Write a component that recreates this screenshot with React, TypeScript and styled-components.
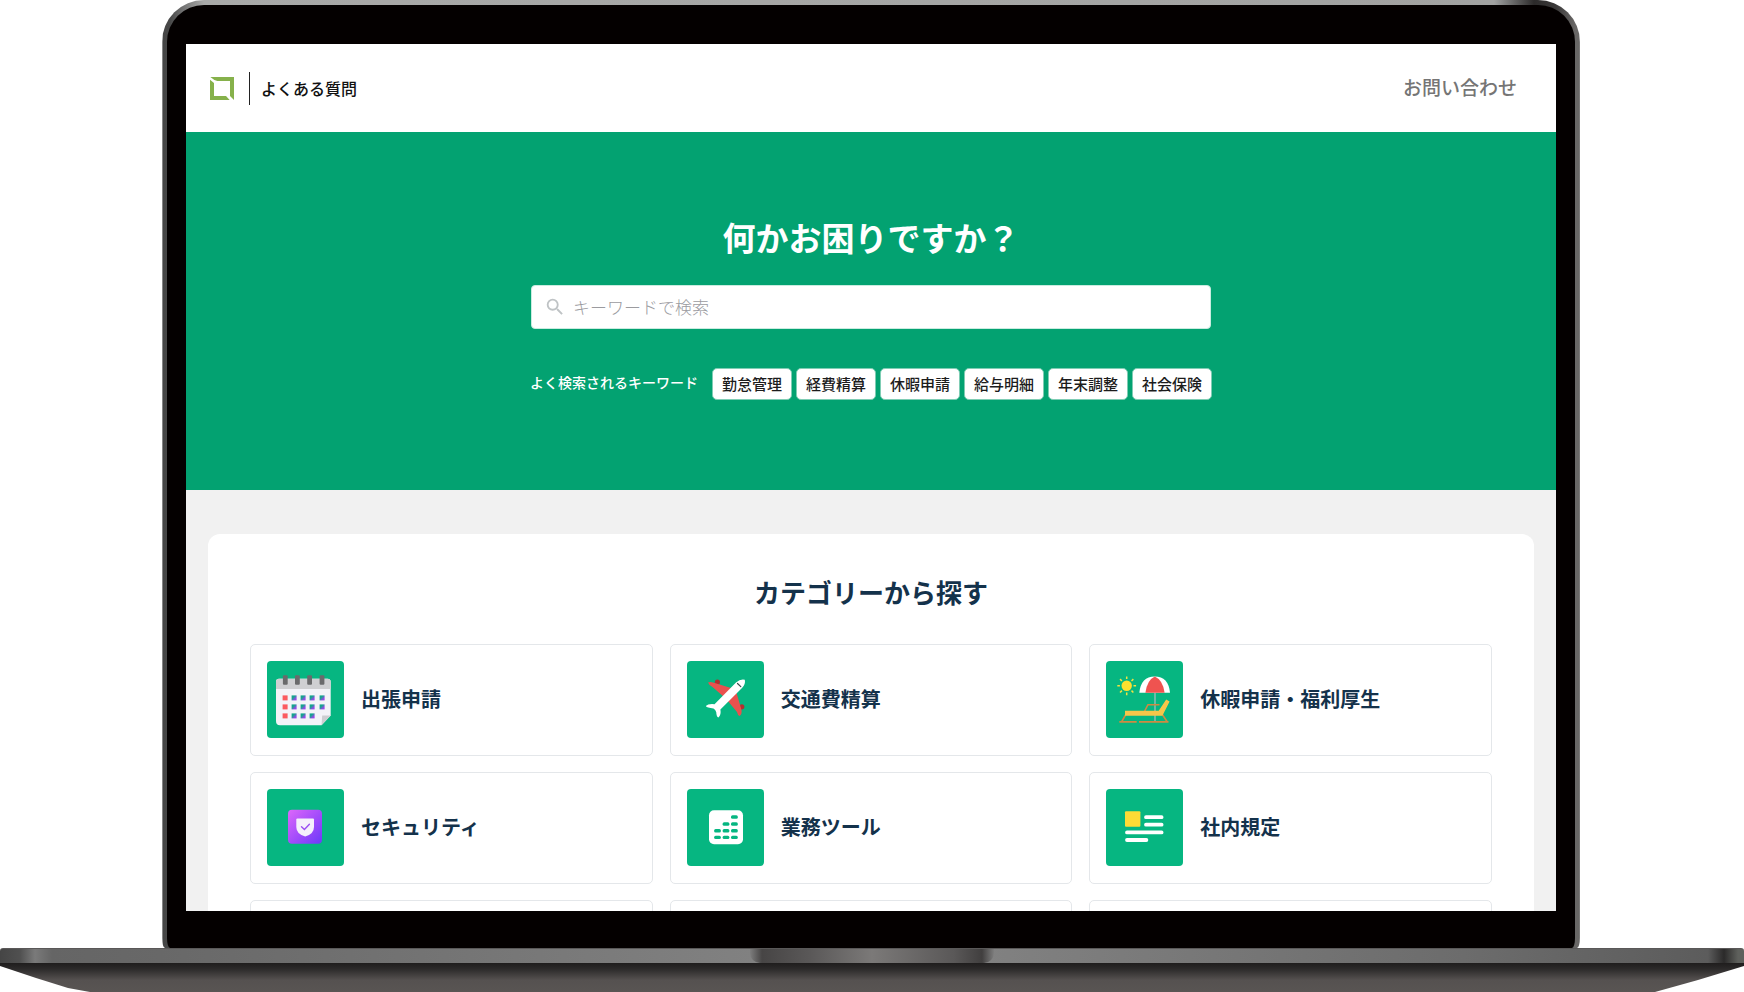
import React from "react";
import styled, { createGlobalStyle } from "styled-components";
import { MdSearch } from "react-icons/md";

const GlobalStyle = createGlobalStyle`
  * { box-sizing: border-box; }
  body {
    margin: 0;
    background: #fff;
    font-family: "Noto Sans CJK JP", "Noto Sans", sans-serif;
    -webkit-font-smoothing: antialiased;
  }
`;

const Laptop = styled.div`
  display: flex;
  flex-direction: column;
  height: 100vh;
  overflow: hidden;
`;

const Lid = styled.div`
  display: flex;
  flex: 1;
  min-height: 0;
  margin: 0 164px 0 162px;
  padding: 5px 5px 0;
  border-radius: 42px 42px 3px 3px / 42px 42px 10px 10px;
  background: linear-gradient(
    90deg,
    #868686 0,
    #868686 1px,
    #454545 1px,
    #484848 8px,
    #707070 20px,
    #a9a9a8 42px,
    #a2a2a1 calc(100% - 86px),
    #8a8a8a calc(100% - 78px),
    #2c2a2a calc(100% - 46px),
    #3a3838 calc(100% - 24px),
    #696766 calc(100% - 5px),
    #696766 calc(100% - 1px),
    #8e8c8c 100%
  );
`;

const Bezel = styled.div`
  display: flex;
  flex: 1;
  min-width: 0;
  padding: 39px 19px 37px;
  border-radius: 37px 37px 3px 3px / 37px 37px 10px 10px;
  background: #040000;
`;

const Screen = styled.div`
  flex: 1;
  min-width: 0;
  overflow: hidden;
  background: #f1f1f1;
`;

const Deck = styled.div`
  display: flex;
  flex: none;
  justify-content: center;
  height: 15px;
  border-top: 1px solid #5a5858;
  border-radius: 3px 3px 0 0;
  background: linear-gradient(
    90deg,
    #454545 0,
    #505050 20px,
    #7a7a7a 35px,
    #656565 52px,
    #686868 160px,
    #868686 50%,
    #6c6c6c calc(100% - 280px),
    #5c5c5c calc(100% - 36px),
    #2b2a2a calc(100% - 20px),
    #5e605c calc(100% - 6px),
    #5e605c 100%
  );
`;

const Notch = styled.div`
  width: 244px;
  border-radius: 0 0 10px 10px;
  background: linear-gradient(
    90deg,
    #7d7d7d 0,
    #474545 12px,
    #5a5858 60px,
    #7b7978 50%,
    #5a5858 calc(100% - 40px),
    #413f3f calc(100% - 12px),
    #7d7d7d 100%
  );
`;

const Underside = styled.div`
  flex: none;
  height: 29px;
  background: linear-gradient(180deg, #1f1d1d 0, #2c2a2a 6px, #555150 17px, #595553 100%);
  clip-path: polygon(
    0 0,
    100% 0,
    100% 3px,
    calc(100% - 46px) 17px,
    calc(100% - 89px) 100%,
    90px 100%,
    68px 25px,
    36px 15px,
    0 3px
  );
`;

const Header = styled.header`
  display: flex;
  align-items: center;
  justify-content: space-between;
  height: 88px;
  padding: 0 39px 0 24px;
  background: #fff;
`;

const Brand = styled.a`
  display: flex;
  align-items: center;
  color: #111;
  text-decoration: none;
`;

const BrandName = styled.span`
  margin-left: 15px;
  padding-left: 11px;
  border-left: 1px solid #222;
  font-size: 16px;
  font-weight: 500;
  line-height: 33px;
`;

const ContactLink = styled.a`
  padding-bottom: 3px;
  color: #757575;
  font-size: 19px;
  font-weight: 500;
  line-height: 28px;
  text-decoration: none;
`;

const Hero = styled.section`
  display: flex;
  flex-direction: column;
  align-items: center;
  height: 358px;
  padding-top: 81px;
  background: #03a271;
`;

const HeroTitle = styled.h1`
  margin: 0 0 24px;
  color: #fff;
  font-size: 33px;
  font-weight: 700;
  line-height: 48px;
`;

const SearchBox = styled.label`
  display: flex;
  align-items: center;
  gap: 7px;
  width: 680px;
  height: 44px;
  padding: 0 12px;
  border: 1px solid #c9ece0;
  border-radius: 4px;
  background: #fff;
  color: #bfc3c5;
`;

const SearchInput = styled.input`
  flex: 1;
  min-width: 0;
  padding: 0;
  border: 0;
  outline: 0;
  background: transparent;
  color: #222;
  font-family: inherit;
  font-size: 17px;
  font-weight: 300;
  line-height: 24px;
  &::placeholder {
    color: #9b9b9f;
    opacity: 1;
  }
`;

const Keywords = styled.div`
  display: flex;
  align-items: center;
  justify-content: space-between;
  width: 682px;
  margin-top: 39px;
`;

const KeywordsLabel = styled.span`
  padding-bottom: 4px;
  color: #fff;
  font-size: 14px;
  font-weight: 500;
  line-height: 28px;
`;

const KeywordList = styled.div`
  display: flex;
  gap: 4px;
`;

const Keyword = styled.button`
  height: 32px;
  padding: 0 9px;
  border: 1px solid #7fcdb4;
  border-radius: 5px;
  background: #fff;
  color: #1c1c1c;
  font-family: inherit;
  font-size: 15px;
  font-weight: 500;
  line-height: 28px;
`;

const Panel = styled.section`
  margin: 44px 22px 0;
  padding: 38px 42px;
  border-radius: 12px;
  background: #fff;
`;

const PanelTitle = styled.h2`
  margin: 0 0 32px;
  color: #14324b;
  font-size: 26px;
  font-weight: 700;
  line-height: 40px;
  text-align: center;
`;

const CardGrid = styled.div`
  display: grid;
  grid-template-columns: repeat(3, 1fr);
  gap: 16px 17px;
`;

const Card = styled.a`
  display: flex;
  align-items: center;
  gap: 17px;
  height: 112px;
  padding: 0 16px 1px;
  border: 1px solid #e4e7ea;
  border-radius: 5px;
  color: #14324b;
  font-size: 20px;
  font-weight: 700;
  line-height: 28px;
  text-decoration: none;
`;

const CardLabel = styled.span`
  padding-bottom: 1px;
`;

const Tile = styled.svg`
  flex: none;
  width: 77px;
  height: 77px;
  border-radius: 4px;
  background: #06b681;
`;

const Logo = () => (
  <svg width="24" height="23" viewBox="0 0 72 69" aria-hidden="true">
    <path fill="#86b14b" d="M1 0H72V69L60 57V12H22Q12 10 1 0Z" />
    <path fill="#86b14b" d="M0 8L12 18V57H48L59 69H0Z" />
  </svg>
);

const CalendarIcon = () => {
  const columns = [18, 27, 36, 45, 55];
  const rows = [37, 46, 55];
  return (
    <Tile viewBox="0 0 77 77" aria-hidden="true">
      <defs>
        <linearGradient id="day" x1="0" y1="0" x2="1" y2="1">
          <stop offset="0.35" stopColor="#13a58c" />
          <stop offset="0.75" stopColor="#9a45e8" />
        </linearGradient>
      </defs>
      <path d="M12 17.7H60.5Q63.7 17.7 63.7 21V54.5L54.5 64.3H13Q9 64.3 9 60V21Q9 17.7 12 17.7Z" fill="#f3f3f8" />
      <path d="M12 17.7H60.5Q63.7 17.7 63.7 21V28H9V21Q9 17.7 12 17.7Z" fill="#cfcfd2" />
      <path d="M54.5 64.3L55.2 54.6L63.7 54.5Z" fill="#cdcdd1" />
      {[18.3, 30.4, 42.6, 55].map((x) => (
        <rect key={x} x={x - 2.4} y="14.3" width="4.8" height="9.4" rx="1" fill="#6a6a6c" />
      ))}
      {rows.map((y, r) =>
        columns.map((x, c) =>
          r === 2 && c === 4 ? null : (
            <rect key={`${r}-${c}`} x={x - 2.4} y={y - 2.6} width="5" height="5" fill={c === 0 ? "#fb5a60" : "url(#day)"} />
          )
        )
      )}
    </Tile>
  );
};

const PlaneIcon = () => (
  <Tile viewBox="0 0 77 77" aria-hidden="true">
    <g fill="#b2302f">
      <circle cx="30.4" cy="21" r="2.6" />
      <circle cx="54.8" cy="45.8" r="2.6" />
    </g>
    <path d="M21 21.6Q23 20.5 26 21.4L44 27L37 36L25.5 26Q22 24.4 21 21.6Z" fill="#e9514e" />
    <path d="M40 39L49 30L54.5 49Q55.2 53.5 52.5 55Q50.6 54 50 51Z" fill="#e9514e" />
    <path
      d="M57.8 18.7Q58.8 23 55 27L33.4 48.6Q34.4 54 31.4 56.6Q29.5 56 29.2 51Q28.5 48.8 26.5 47.4Q20 47 18.8 45Q21 42.6 27.5 43.2L49 21.6Q53.5 17.5 57.8 18.7Z"
      fill="#fff"
    />
    <path d="M50.5 22.5L53.8 25.6" stroke="#3d4a4a" strokeWidth="1.2" strokeLinecap="round" />
  </Tile>
);

const BeachIcon = () => (
  <Tile viewBox="0 0 77 77" aria-hidden="true" fill="none">
    <circle cx="20.7" cy="24.8" r="5.2" fill="#fde02f" />
    <g stroke="#f4e240" strokeWidth="1.5">
      {[0, 45, 90, 135, 180, 225, 270, 315].map((a) => (
        <path key={a} d="M20.7 18V15.4" transform={`rotate(${a} 20.7 24.8)`} />
      ))}
    </g>
    <path d="M49 31V60" stroke="#8fb9b4" strokeWidth="1.5" />
    <path d="M33.3 31.7Q35 15.4 48.7 15.4Q62.5 15.4 64 31.7Z" fill="#fff" />
    <path d="M39.4 31.7Q41 19 48.8 15.4Q57 19 58.6 31.7Z" fill="#ef5350" />
    <g stroke="#cf8a41" strokeWidth="1.6" strokeLinejoin="round">
      <path d="M38.7 50L42 43.7H53.5" />
      <path d="M19.5 54L15.8 60.5M56 53L61 60.5" />
      <path d="M13.3 60.9H30.7M33 60.9H62.5" />
    </g>
    <path d="M19 49.7H52.7L60.2 38.4L63.6 40.6L56.4 54.7H19Z" fill="#f6c64a" />
  </Tile>
);

const ShieldIcon = () => (
  <Tile viewBox="0 0 77 77" aria-hidden="true">
    <defs>
      <linearGradient id="badge" x1="0" y1="0" x2="1" y2="1">
        <stop offset="0" stopColor="#dd68fb" />
        <stop offset="0.55" stopColor="#a04bfa" />
        <stop offset="1" stopColor="#6c3bfa" />
      </linearGradient>
    </defs>
    <rect x="21" y="20.7" width="34" height="34" rx="4" fill="url(#badge)" />
    <path d="M30.4 29.4H46Q47 29.4 47 30.5V38Q47 45 38.2 47.5Q29.3 45 29.3 38V30.5Q29.3 29.4 30.4 29.4Z" fill="#f5f0fb" />
    <path d="M34.5 37.8L37.4 40.6L42.4 35.2" fill="none" stroke="#9b4ff2" strokeWidth="1.4" strokeLinecap="round" />
  </Tile>
);

const ToolIcon = () => {
  const cells = [
    [47.4, 28],
    [39, 35], [47.4, 35],
    [30.5, 41.7], [39, 41.7], [47.4, 41.7],
    [30.5, 48.4], [39, 48.4], [47.4, 48.4],
  ];
  return (
    <Tile viewBox="0 0 77 77" aria-hidden="true">
      <rect x="22" y="21.3" width="34" height="34" rx="5" fill="#fff" />
      {cells.map(([x, y]) => (
        <rect key={`${x}-${y}`} x={x - 3.4} y={y - 1.7} width="6.8" height="3.4" rx="1.5" fill="#06b681" />
      ))}
    </Tile>
  );
};

const ArticleIcon = () => (
  <Tile viewBox="0 0 77 77" aria-hidden="true">
    <rect x="19" y="22.3" width="15.4" height="15.4" rx="1" fill="#fedb35" />
    <path d="M40 28.2H55.6M40 35.7H55.6M21 43.4H55.6M21 51H40.4" stroke="#fff" strokeWidth="3.8" strokeLinecap="round" />
  </Tile>
);

const keywords = ["勤怠管理", "経費精算", "休暇申請", "給与明細", "年末調整", "社会保険"];

const categories = [
  { label: "出張申請", Icon: CalendarIcon },
  { label: "交通費精算", Icon: PlaneIcon },
  { label: "休暇申請・福利厚生", Icon: BeachIcon },
  { label: "セキュリティ", Icon: ShieldIcon },
  { label: "業務ツール", Icon: ToolIcon },
  { label: "社内規定", Icon: ArticleIcon },
];

export default function App() {
  return (
    <>
      <GlobalStyle />
      <Laptop>
        <Lid>
          <Bezel>
            <Screen>
              <Header>
                <Brand href="#">
                  <Logo />
                  <BrandName>よくある質問</BrandName>
                </Brand>
                <ContactLink href="#contact">お問い合わせ</ContactLink>
              </Header>
              <Hero>
                <HeroTitle>何かお困りですか？</HeroTitle>
                <SearchBox>
                  <MdSearch size={22} aria-hidden="true" />
                  <SearchInput type="text" aria-label="キーワードで検索" placeholder="キーワードで検索" />
                </SearchBox>
                <Keywords>
                  <KeywordsLabel>よく検索されるキーワード</KeywordsLabel>
                  <KeywordList>
                    {keywords.map((word) => (
                      <Keyword key={word} type="button">{word}</Keyword>
                    ))}
                  </KeywordList>
                </Keywords>
              </Hero>
              <Panel>
                <PanelTitle>カテゴリーから探す</PanelTitle>
                <CardGrid>
                  {categories.map(({ label, Icon }) => (
                    <Card key={label} href="#category">
                      <Icon />
                      <CardLabel>{label}</CardLabel>
                    </Card>
                  ))}
                  {[0, 1, 2].map((n) => (
                    <Card key={n} as="div" />
                  ))}
                </CardGrid>
              </Panel>
            </Screen>
          </Bezel>
        </Lid>
        <Deck>
          <Notch />
        </Deck>
        <Underside />
      </Laptop>
    </>
  );
}
